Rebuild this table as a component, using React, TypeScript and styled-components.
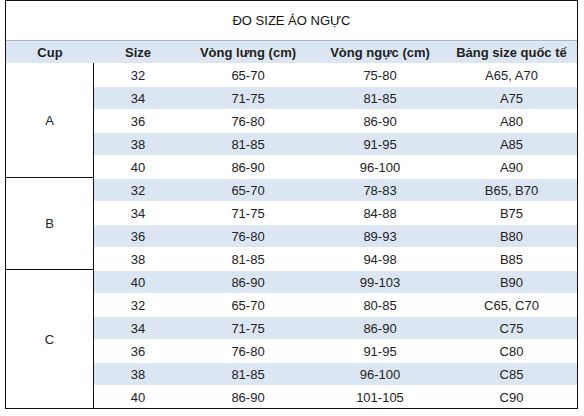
import React from 'react'
import styled, { createGlobalStyle } from 'styled-components'

type Row = {
  size: string
  back: string
  bust: string
  intl: string
}

type Group = {
  cup: string
  rows: Row[]
}

const groups: Group[] = [
  {
    cup: 'A',
    rows: [
      { size: '32', back: '65-70', bust: '75-80', intl: 'A65, A70' },
      { size: '34', back: '71-75', bust: '81-85', intl: 'A75' },
      { size: '36', back: '76-80', bust: '86-90', intl: 'A80' },
      { size: '38', back: '81-85', bust: '91-95', intl: 'A85' },
      { size: '40', back: '86-90', bust: '96-100', intl: 'A90' },
    ],
  },
  {
    cup: 'B',
    rows: [
      { size: '32', back: '65-70', bust: '78-83', intl: 'B65, B70' },
      { size: '34', back: '71-75', bust: '84-88', intl: 'B75' },
      { size: '36', back: '76-80', bust: '89-93', intl: 'B80' },
      { size: '38', back: '81-85', bust: '94-98', intl: 'B85' },
    ],
  },
  {
    cup: 'C',
    rows: [
      { size: '40', back: '86-90', bust: '99-103', intl: 'B90' },
      { size: '32', back: '65-70', bust: '80-85', intl: 'C65, C70' },
      { size: '34', back: '71-75', bust: '86-90', intl: 'C75' },
      { size: '36', back: '76-80', bust: '91-95', intl: 'C80' },
      { size: '38', back: '81-85', bust: '96-100', intl: 'C85' },
      { size: '40', back: '86-90', bust: '101-105', intl: 'C90' },
    ],
  },
]

const COLUMNS = '88px 88px 132px 132px 131px'
const ROW_H = 23

export default function App() {
  let index = 0
  return (
    <>
      <GlobalStyle />
      <Page>
        <Frame>
          <Title>ĐO SIZE ÁO NGỰC</Title>
          <HeaderRow>
            <HeadCell>Cup</HeadCell>
            <HeadCell>Size</HeadCell>
            <HeadCell>Vòng lưng (cm)</HeadCell>
            <HeadCell>Vòng ngực (cm)</HeadCell>
            <HeadCell>Bảng size quốc tế</HeadCell>
          </HeaderRow>
          {groups.map((g, gi) => (
            <GroupBlock key={g.cup}>
              <CupCell rows={g.rows.length} last={gi === groups.length - 1}>
                {g.cup}
              </CupCell>
              <Rows>
                {g.rows.map((r) => {
                  const striped = index++ % 2 === 1
                  return (
                    <DataRow key={index} striped={striped}>
                      <Cell>{r.size}</Cell>
                      <Cell>{r.back}</Cell>
                      <Cell>{r.bust}</Cell>
                      <Cell>{r.intl}</Cell>
                    </DataRow>
                  )
                })}
              </Rows>
            </GroupBlock>
          ))}
        </Frame>
      </Page>
    </>
  )
}

const GlobalStyle = createGlobalStyle`
  html, body {
    margin: 0;
    padding: 0;
    background: #fff;
  }

  body {
    font-family: "Liberation Sans", Arial, sans-serif;
    color: #222;
  }
`

const Page = styled.div`
  width: 584px;
  height: 416px;
  padding-left: 5px;
  box-sizing: border-box;
  background: #fff;
`

const Frame = styled.div`
  width: 573px;
  border: 1px solid #111;
  box-sizing: border-box;
`

const Title = styled.div`
  height: 39px;
  display: flex;
  align-items: center;
  justify-content: center;
  font-size: 13px;
  color: #111;
`

const HeaderRow = styled.div`
  display: grid;
  grid-template-columns: ${COLUMNS};
  height: 23px;
  box-sizing: border-box;
  border-top: 1px solid #a8b6c6;
  background: #dce6f2;
`

const HeadCell = styled.div`
  display: flex;
  align-items: center;
  justify-content: center;
  font-size: 13px;
  font-weight: 700;
  color: #1e1e1e;
`

const GroupBlock = styled.div`
  display: flex;
`

const CupCell = styled.div<{ rows: number; last: boolean }>`
  width: 88px;
  height: ${(p) => p.rows * ROW_H}px;
  flex-shrink: 0;
  box-sizing: border-box;
  border-right: 1px solid #111;
  border-bottom: ${(p) => (p.last ? 'none' : '1px solid #111')};
  display: flex;
  align-items: center;
  justify-content: center;
  font-size: 13px;
  color: #222;
`

const Rows = styled.div`
  flex: 1;
  display: flex;
  flex-direction: column;
`

const DataRow = styled.div<{ striped: boolean }>`
  display: grid;
  grid-template-columns: 88px 132px 132px 131px;
  height: ${ROW_H}px;
  box-sizing: border-box;
  border-top: 1px solid #fff;
  background: ${(p) => (p.striped ? '#dce6f2' : '#fff')};
`

const Cell = styled.div`
  display: flex;
  align-items: center;
  justify-content: center;
  font-size: 13px;
  color: #222;
`
